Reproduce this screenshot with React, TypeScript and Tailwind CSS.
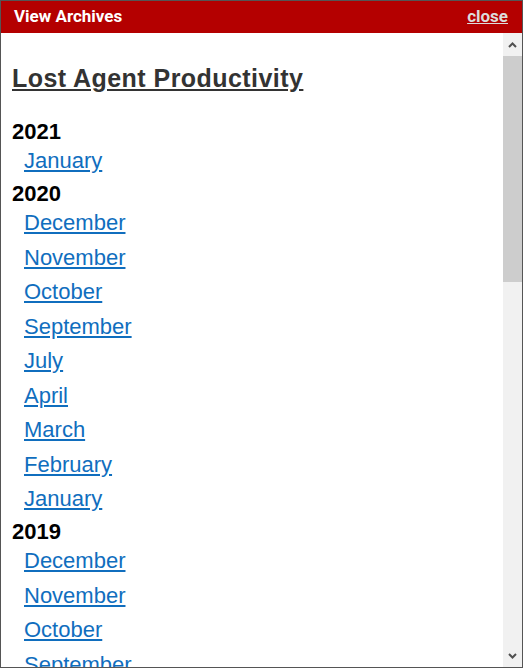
import React from 'react';

const archives: { year: string; months: string[] }[] = [
  { year: '2021', months: ['January'] },
  {
    year: '2020',
    months: ['December', 'November', 'October', 'September', 'July', 'April', 'March', 'February', 'January'],
  },
  {
    year: '2019',
    months: ['December', 'November', 'October', 'September', 'August', 'July', 'June', 'May', 'April'],
  },
];

const Chevron: React.FC<{ down?: boolean }> = ({ down }) => (
  <svg width="9" height="6" viewBox="0 0 9 6" className="block">
    <polyline
      points={down ? '1,1 4.5,4.5 8,1' : '1,5 4.5,1.5 8,5'}
      fill="none"
      stroke="#505050"
      strokeWidth="2"
    />
  </svg>
);

const App: React.FC = () => {
  return (
    <div className="w-[523px] h-[668px] border border-[#555] flex flex-col bg-white font-['Liberation_Sans',Arial,sans-serif]">
      {/* header bar */}
      <div className="h-[32px] shrink-0 bg-[#b40000] flex items-start justify-between pl-[13px] pr-[14px] pt-[5px] font-['Roboto',sans-serif]">
        <span className="text-white font-bold text-[17px] leading-[20px]">View Archives</span>
        <a href="#" className="text-[#dcdcdc] font-bold text-[17px] leading-[20px] underline">
          close
        </a>
      </div>

      <div className="flex-1 flex min-h-0">
        <div className="flex-1 overflow-hidden pl-[11px]">
          <h1 className="mt-[30px] text-[25px] leading-[30px] font-bold text-[#333] underline tracking-[0.45px]">
            Lost Agent Productivity
          </h1>
          <div className="mt-[26px]">
            {archives.map((group) => (
              <div key={group.year} className="pb-[7px]">
                <h3 className="text-[22px] leading-[26px] font-bold text-black">{group.year}</h3>
                <ul className="mt-[3px] pl-[12px] flex flex-col gap-[8.5px]">
                  {group.months.map((m, i) => (
                    <li key={i} className="text-[22px] leading-[26px]">
                      <a href="#" className="text-[#106ebe] underline">
                        {m}
                      </a>
                    </li>
                  ))}
                </ul>
              </div>
            ))}
          </div>
        </div>

        {/* scrollbar */}
        <div className="w-[19px] shrink-0 bg-[#f1f1f1] flex flex-col">
          <div className="h-[23px] flex items-center justify-center">
            <Chevron />
          </div>
          <div className="h-[226px] bg-[#cdcdcd]" />
          <div className="flex-1" />
          <div className="h-[22px] flex items-center justify-center">
            <Chevron down />
          </div>
        </div>
      </div>
    </div>
  );
};

export default App;
